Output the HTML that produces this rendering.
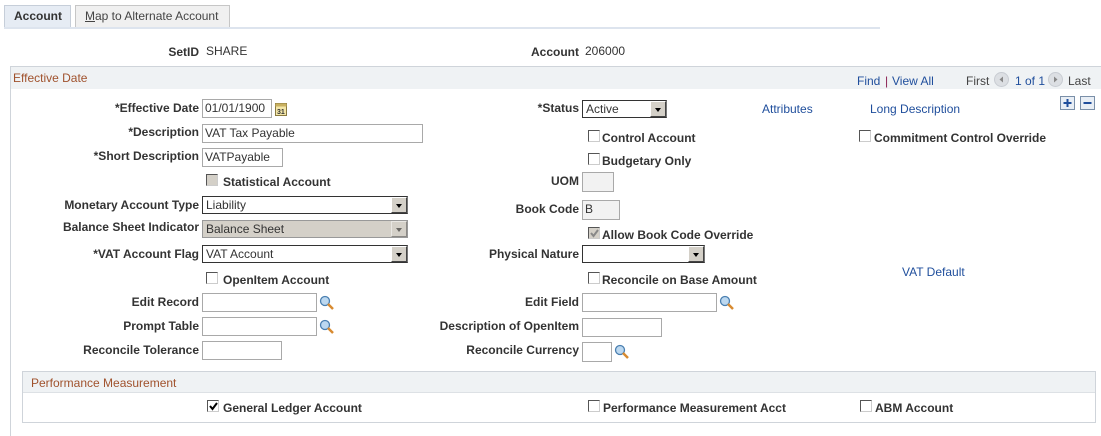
<!DOCTYPE html>
<html><head><meta charset="utf-8"><style>
*{margin:0;padding:0;box-sizing:border-box}
body{width:1101px;height:429px;background:#fff;position:relative;overflow:hidden;font-family:"Liberation Sans",Arial,sans-serif;font-size:12px;color:#333}
.a{position:absolute;white-space:nowrap}
.lb{position:absolute;white-space:nowrap;font-weight:bold;text-align:right;line-height:16px}
.in{position:absolute;border:1px solid #a9a9a9;background:#fff;height:19px;font-size:12px;line-height:17px;padding-left:2px;color:#333}
.sel{position:absolute;border:1px solid #333;border-right:1px solid #777;background:#fff;height:18px;font-size:12px;line-height:16px;padding-left:3px;color:#333}
.sel .ar{position:absolute;right:0;top:0;width:16px;height:16px;background:#d4d0c8;border-left:1px solid #fff;border:1px solid #fff;border-right-color:#444;border-bottom-color:#444}
.sel .ar:after{content:"";position:absolute;left:4px;top:6px;border-left:3px solid transparent;border-right:3px solid transparent;border-top:4px solid #000}
.cb{position:absolute;width:12px;height:12px;border:1px solid #555;border-right-color:#ccc;border-bottom-color:#ccc;background:#fff}
.cbl{position:absolute;white-space:nowrap;font-weight:bold;line-height:14px}
.lk{position:absolute;white-space:nowrap;color:#1f4e9c}
.mg{position:absolute;width:16px;height:16px}
</style></head><body>
<!-- tabs -->
<div class="a" style="left:4px;top:5px;width:67px;height:23px;background:#e6ecf4;border:1px solid #c6ced9;border-bottom:none"></div>
<div class="a" style="left:14px;top:9px;font-weight:bold;color:#333">Account</div>
<div class="a" style="left:75px;top:5px;width:155px;height:22px;background:#f0f0f0;border:1px solid #c6c6c6;border-bottom:none"></div>
<div class="a" style="left:85px;top:9px;color:#444"><u>M</u>ap to Alternate Account</div>
<div class="a" style="left:4px;top:27px;width:876px;height:2px;background:#dde4ee"></div>

<div class="lb" style="left:100px;top:44px;width:99px">SetID</div>
<div class="a" style="left:206px;top:44px">SHARE</div>
<div class="lb" style="left:480px;top:44px;width:99px">Account</div>
<div class="a" style="left:585px;top:44px">206000</div>

<!-- effective date frame -->
<div class="a" style="left:10px;top:66px;width:1100px;height:370px;border:1px solid #cfd4da;border-right:none;border-bottom:none"></div>
<div class="a" style="left:11px;top:67px;width:1090px;height:22px;background:#eff2f4"></div>
<div class="a" style="left:13px;top:71px;color:#a0522d;font-size:12px">Effective Date</div>
<div class="lk" style="left:857px;top:74px">Find</div>
<div class="a" style="left:885px;top:74px;color:#8b2252">|</div>
<div class="lk" style="left:892px;top:74px">View All</div>
<div class="a" style="left:966px;top:74px;color:#444">First</div>
<svg class="a" style="left:994px;top:72px" width="15" height="15"><circle cx="7.5" cy="7.5" r="7" fill="#dcdfe3" stroke="#c8ccd2"/><path d="M9 4.5 L5.5 7.5 L9 10.5Z" fill="#888"/></svg>
<div class="a" style="left:1015px;top:74px;color:#1f4e9c">1 of 1</div>
<svg class="a" style="left:1048px;top:72px" width="15" height="15"><circle cx="7.5" cy="7.5" r="7" fill="#dcdfe3" stroke="#c8ccd2"/><path d="M6 4.5 L9.5 7.5 L6 10.5Z" fill="#888"/></svg>
<div class="a" style="left:1068px;top:74px;color:#444">Last</div>

<!-- left column -->
<div class="lb" style="left:60px;top:100px;width:139px">*Effective Date</div>
<div class="in" style="left:202px;top:99px;width:70px">01/01/1900</div>
<svg class="a" style="left:275px;top:102px" width="12" height="14"><rect x="0.5" y="1.5" width="11" height="12" fill="#f3e6a8" stroke="#8a7a40"/><rect x="0.5" y="1.5" width="11" height="3" fill="#c8b060"/><text x="2" y="12" font-size="7" font-family="Liberation Sans" font-weight="bold" fill="#333">31</text></svg>
<div class="lb" style="left:60px;top:124px;width:139px">*Description</div>
<div class="in" style="left:202px;top:124px;width:221px">VAT Tax Payable</div>
<div class="lb" style="left:60px;top:148px;width:139px">*Short Description</div>
<div class="in" style="left:202px;top:148px;width:81px">VATPayable</div>
<div class="cb" style="left:206px;top:174px;background:#d4d0c8"></div>
<div class="cbl" style="left:223px;top:175px">Statistical Account</div>
<div class="lb" style="left:30px;top:197px;width:169px">Monetary Account Type</div>
<div class="sel" style="left:202px;top:196px;width:206px">Liability<span class="ar"></span></div>
<div class="lb" style="left:30px;top:219px;width:169px">Balance Sheet Indicator</div>
<div class="sel" style="left:202px;top:220px;width:206px;background:#d4d0c8;border-color:#999">Balance Sheet<span class="ar" style="opacity:.5"></span></div>
<div class="lb" style="left:30px;top:246px;width:169px">*VAT Account Flag</div>
<div class="sel" style="left:202px;top:245px;width:206px">VAT Account<span class="ar"></span></div>
<div class="cb" style="left:206px;top:272px"></div>
<div class="cbl" style="left:223px;top:273px">OpenItem Account</div>
<div class="lb" style="left:30px;top:294px;width:169px">Edit Record</div>
<div class="in" style="left:202px;top:293px;width:115px"></div>
<div class="lb" style="left:30px;top:318px;width:169px">Prompt Table</div>
<div class="in" style="left:202px;top:317px;width:115px"></div>
<div class="lb" style="left:30px;top:342px;width:169px">Reconcile Tolerance</div>
<div class="in" style="left:202px;top:341px;width:80px"></div>

<!-- middle column -->
<div class="lb" style="left:480px;top:100px;width:99px">*Status</div>
<div class="sel" style="left:582px;top:100px;width:85px">Active<span class="ar"></span></div>
<div class="cb" style="left:588px;top:130px"></div>
<div class="cbl" style="left:602px;top:131px">Control Account</div>
<div class="cb" style="left:588px;top:153px"></div>
<div class="cbl" style="left:602px;top:154px">Budgetary Only</div>
<div class="lb" style="left:480px;top:173px;width:99px">UOM</div>
<div class="in" style="left:582px;top:172px;width:32px;height:20px;background:#f2f2f2"></div>
<div class="lb" style="left:480px;top:201px;width:99px">Book Code</div>
<div class="in" style="left:582px;top:200px;width:38px;height:20px;background:#f2f2f2">B</div>
<div class="cb" style="left:588px;top:227px;background:#d4d0c8"></div>
<svg class="a" style="left:589px;top:228px" width="11" height="11"><path d="M2 5 L4.5 8 L9 2" stroke="#888" stroke-width="2" fill="none"/></svg>
<div class="cbl" style="left:602px;top:228px">Allow Book Code Override</div>
<div class="lb" style="left:440px;top:246px;width:139px">Physical Nature</div>
<div class="sel" style="left:582px;top:245px;width:123px"><span class="ar"></span></div>
<div class="cb" style="left:588px;top:272px"></div>
<div class="cbl" style="left:602px;top:273px">Reconcile on Base Amount</div>
<div class="lb" style="left:440px;top:294px;width:139px">Edit Field</div>
<div class="in" style="left:582px;top:293px;width:135px"></div>
<div class="lb" style="left:420px;top:318px;width:159px">Description of OpenItem</div>
<div class="in" style="left:582px;top:318px;width:80px"></div>
<div class="lb" style="left:420px;top:342px;width:159px">Reconcile Currency</div>
<div class="in" style="left:582px;top:342px;width:30px;height:20px"></div>

<!-- magnifiers -->
<svg class="mg" style="left:319px;top:295px"><circle cx="6" cy="6" r="4.5" fill="#bcd8f0" stroke="#4a7fb0" stroke-width="1.3"/><path d="M9 9 L14 14" stroke="#d88a30" stroke-width="2.5"/></svg>
<svg class="mg" style="left:319px;top:319px"><circle cx="6" cy="6" r="4.5" fill="#bcd8f0" stroke="#4a7fb0" stroke-width="1.3"/><path d="M9 9 L14 14" stroke="#d88a30" stroke-width="2.5"/></svg>
<svg class="mg" style="left:719px;top:295px"><circle cx="6" cy="6" r="4.5" fill="#bcd8f0" stroke="#4a7fb0" stroke-width="1.3"/><path d="M9 9 L14 14" stroke="#d88a30" stroke-width="2.5"/></svg>
<svg class="mg" style="left:614px;top:344px"><circle cx="6" cy="6" r="4.5" fill="#bcd8f0" stroke="#4a7fb0" stroke-width="1.3"/><path d="M9 9 L14 14" stroke="#d88a30" stroke-width="2.5"/></svg>

<!-- right column -->
<div class="lk" style="left:762px;top:102px">Attributes</div>
<div class="lk" style="left:870px;top:102px">Long Description</div>
<svg class="a" style="left:1060px;top:96px" width="36" height="15"><rect x="0.5" y="0.5" width="14" height="13" fill="#e8eef5" stroke="#7a8fa8"/><path d="M7.5 3 V11 M3.5 7 H11.5" stroke="#1f4e9c" stroke-width="2"/><rect x="20.5" y="0.5" width="14" height="13" fill="#e8eef5" stroke="#7a8fa8"/><path d="M23.5 7 H31.5" stroke="#1f4e9c" stroke-width="2"/></svg>
<div class="cb" style="left:859px;top:130px"></div>
<div class="cbl" style="left:874px;top:131px">Commitment Control Override</div>
<div class="lk" style="left:902px;top:265px">VAT Default</div>

<!-- performance measurement -->
<div class="a" style="left:22px;top:371px;width:1074px;height:52px;border:1px solid #cfd4da"></div>
<div class="a" style="left:23px;top:372px;width:1072px;height:21px;background:#eff2f4;border-bottom:1px solid #dde1e5"></div>
<div class="a" style="left:31px;top:376px;color:#a0522d">Performance Measurement</div>
<div class="cb" style="left:207px;top:400px"></div>
<svg class="a" style="left:208px;top:401px" width="11" height="11"><path d="M2 5 L4.5 8 L9 2" stroke="#000" stroke-width="2" fill="none"/></svg>
<div class="cbl" style="left:223px;top:401px">General Ledger Account</div>
<div class="cb" style="left:588px;top:400px"></div>
<div class="cbl" style="left:603px;top:401px">Performance Measurement Acct</div>
<div class="cb" style="left:860px;top:400px"></div>
<div class="cbl" style="left:875px;top:401px">ABM Account</div>
</body></html>
